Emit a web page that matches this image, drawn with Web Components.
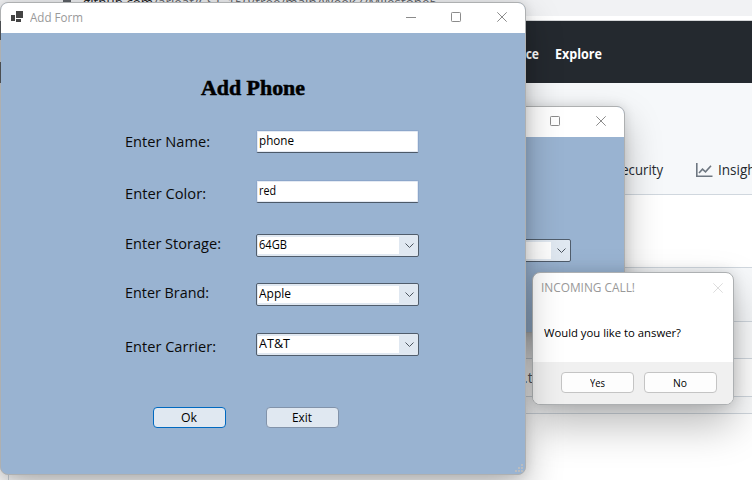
<!DOCTYPE html>
<html lang="en">
<head>
<meta charset="utf-8">
<title>Add Form</title>
<style>
html,body{margin:0;width:752px;height:480px;overflow:hidden;background:#fff}
body{font-family:"Open Sans","Noto Sans",sans-serif}
</style>
</head>
<body>
<desk-top></desk-top>
<script>
function define(name, html, ready) {
  const t = document.createElement('template');
  t.innerHTML = html;
  customElements.define(name, class extends HTMLElement {
    connectedCallback() {
      if (this.shadowRoot) return;
      this.attachShadow({mode: 'open'}).append(t.content.cloneNode(true));
      if (ready) ready(this, this.shadowRoot);
    }
  });
}

// Text line condensed or widened horizontally so that it spans `w` pixels.
define('fit-text', `
<style>:host{display:block;white-space:nowrap;line-height:20px;flex:none}span{display:inline-block;transform-origin:0 50%}</style>
<span><slot></slot></span>`, (host, root) => {
  const s = root.querySelector('span'), w = +host.getAttribute('w');
  if (w) {
    const k = w / s.getBoundingClientRect().width;
    host.style.width = w + 'px';
    s.style.transform = 'scaleX(' + k.toFixed(4) + ')';
  }
});

define('caption-buttons', `
<style>:host{display:flex;align-items:center;height:100%}svg{display:block}</style>
<svg width="120" height="30" fill="none" stroke="#8b8b8b" stroke-width="1"><path class="min" d="M1 14.5H11"/><rect x="46.5" y="9.5" width="9" height="9" rx=".8"/><path d="M92.3 9.3L101.7 18.7M101.7 9.3L92.3 18.7"/></svg>`);

define('app-window', `
<style>
:host{display:flex;flex-direction:column;box-sizing:border-box;border:1px solid #aeb0b1;border-radius:8px;overflow:hidden;background:#99b3d1;box-shadow:0 16px 36px rgba(0,0,0,.27),0 0 12px rgba(0,0,0,.12)}
header{display:flex;align-items:center;height:30px;background:#fff;flex:none}
caption-buttons{margin-left:auto}
svg{margin:0 7px 2px 10px}
fit-text{color:#999;font-size:12px}
main{flex:1;min-height:0}
</style>
<header><svg width="12" height="12" fill="#444"><path d="M5 0h7v7H5zM0 4h4v6H0zM5 8h5v3H5z"/></svg><fit-text w="53">Add Form</fit-text><caption-buttons></caption-buttons></header>
<main><slot></slot></main>`);

define('text-box', `
<style>
:host{display:block;box-sizing:border-box;width:163px;height:23px;border:1px solid #8ca6ca;border-bottom-color:#4c5968;border-radius:2px;background:#fff;box-shadow:inset 0 0 0 1px #e4eaf3;padding-left:2px;font-size:12px;color:#000}
::slotted(*){line-height:20px}
</style><slot></slot>`);

define('combo-box', `
<style>
:host{display:flex;box-sizing:border-box;width:163px;height:23px;border:1px solid #505d6c;border-radius:2px;background:#e0e8f1;padding:2px 0 2px 1px;font-size:12px;color:#000}
div{box-sizing:border-box;width:141px;height:17px;background:#fff;padding-left:1px}
::slotted(*){line-height:16px}
svg{margin:5px 0 0 5px}
</style><div><slot></slot></div><svg width="11" height="8" fill="none" stroke="#4d5660"><path d="M1.5 1.5L5.5 5.5L9.5 1.5"/></svg>`);

define('push-button', `
<style>
:host{display:flex;justify-content:center;align-items:center;box-sizing:border-box;width:73px;height:21px;border:1px solid var(--edge,#8293aa);border-radius:4px;background:var(--face,#e0e8f1);font-size:12px;color:#000;padding-right:1px}
</style><slot></slot>`);

define('phone-form', `
<style>
:host{display:block;padding:45px 0 0 124px}
.title{font:bold 20px "Liberation Serif",serif;line-height:20px;margin-left:76px;color:#000;-webkit-text-stroke:.5px #000}
.grid{display:grid;grid-template-columns:131px 163px;grid-template-rows:50px 54px 49px 50px 74px;margin-top:32px}
.grid>fit-text{font-size:15px;color:#0a0a0a}
.buttons{display:flex;gap:40px;margin-left:28px}
</style>
<fit-text class="title" w="104">Add Phone</fit-text>
<div class="grid">
<fit-text w="85" style="margin-top:1px">Enter Name:</fit-text><text-box><fit-text w="35">phone</fit-text></text-box>
<fit-text w="81" style="margin-top:3px">Enter Color:</fit-text><text-box><fit-text w="17">red</fit-text></text-box>
<fit-text w="96" style="margin-top:-1px">Enter Storage:</fit-text><combo-box><fit-text w="28">64GB</fit-text></combo-box>
<fit-text w="84" style="margin-top:-1px">Enter Brand:</fit-text><combo-box><fit-text w="32">Apple</fit-text></combo-box>
<fit-text w="91" style="margin-top:3px">Enter Carrier:</fit-text><combo-box><fit-text w="31">AT&amp;T</fit-text></combo-box>
</div>
<div class="buttons"><push-button style="--edge:#0069c0"><fit-text w="16">Ok</fit-text></push-button><push-button><fit-text w="20">Exit</fit-text></push-button></div>`);

define('call-dialog', `
<style>
:host{display:flex;flex-direction:column;box-sizing:border-box;border:1px solid #adb0b2;border-radius:8px;overflow:hidden;background:#fff;box-shadow:0 20px 42px rgba(0,0,0,.27),0 0 14px rgba(0,0,0,.14)}
header{display:flex;justify-content:space-between;align-items:center;height:29px;padding:0 10px 0 8px;color:#999;font-size:12px}
p{margin:21px 0 0 11px;color:#000;font-size:11.5px}
footer{display:flex;gap:10px;margin-top:auto;background:#f0f0f0;height:32px;padding:10px 0 0 28px;--edge:#c4c4c4;--face:#fdfdfd}
push-button fit-text{font-size:11.5px}
</style>
<header><fit-text w="94">INCOMING CALL!</fit-text><svg width="10" height="10" stroke="#ddd"><path d="M.3.3L9.7 9.7M9.7.3L.3 9.7"/></svg></header>
<p><fit-text w="137">Would you like to answer?</fit-text></p>
<footer><push-button><fit-text w="15">Yes</fit-text></push-button><push-button><fit-text w="14">No</fit-text></push-button></footer>`);

define('repo-page', `
<style>
:host{display:flex;flex-direction:column;width:752px;height:480px;background:#fff;overflow:hidden}
div{box-sizing:border-box;flex:none}
.url{height:16px;background:#f1f2f4;display:flex;gap:11px;padding-left:50px;color:#5f6368;font-size:13.5px}
.url svg{flex:none}
.url fit-text{margin-top:-8px}
b{font-weight:400;color:#202124}
.strip{height:5px;background:#fff;border-bottom:1px solid #d5d7d9}
.nav{height:62px;background:#24292f;color:#fff;font-size:14px;font-weight:700;display:flex;align-items:center;gap:16px;padding:3px 0 0 463px}
.tabs{height:112px;background:#f6f8fa;border-bottom:1px solid #d0d7de;display:flex;align-items:flex-end;padding:0 0 14px 614px;color:#24292f;font-size:13.7px}
.tabs svg{margin:0 5px 2px 33px;flex:none}
.table{height:147px;margin:72px 0 0 8px;border:solid #d0d7de;border-width:1px 0 1px 1px;border-radius:6px 0 0;background:#fff}
.table div{border-bottom:1px solid #d0d7de}
.r1{height:54px;background:#f6f8fa}
.r2{height:37px;background:#fafbfc}
.r3{height:38px;background:#fff;padding:9px 0 0 515px;color:#57606a;font-size:14px}
.r4{height:16px;background:#fafbfc;border:0!important}
.rest{height:66px;margin-left:8px;border-left:1px solid #d0d7de}
</style>
<div class="url"><svg width="22" height="16"><path d="M13 0h8v3h-8z" fill="#5f6368"/></svg><fit-text w="354"><b>github.com</b>/arleaf/CST_150/tree/main/Week7/Milestone5</fit-text></div>
<div class="strip"></div>
<div class="nav"><fit-text w="76">Marketplace</fit-text><fit-text w="47">Explore</fit-text></div>
<div class="tabs"><fit-text w="49">Security</fit-text><svg width="17" height="15" fill="none" stroke="#6e7781" stroke-width="1.6"><path d="M.8 0V13.2H16.5M3 10L6.5 6.2L9.5 8.8L15 2.8"/></svg><fit-text w="49">Insights</fit-text></div>
<div class="table"><div class="r1"></div><div class="r2"></div><div class="r3"><fit-text>.txt</fit-text></div><div class="r4"></div></div>
<div class="rest"></div>`);

define('desk-top', `
<style>
:host{display:block;position:relative;width:752px;height:480px;overflow:hidden}
.back,.front,call-dialog,.edge{position:absolute}
.back{left:100px;top:106px;width:525px;height:227px}
.front{left:0;top:2px;width:526px;height:473px}
call-dialog{left:532px;top:272px;width:202px;height:133px}
.row{display:flex;padding:102px 0 0 307px}
.grip{position:absolute;left:515px;top:464px}
.edge{left:0;top:21px;width:1px;height:62px;background:linear-gradient(#4a4d50 19px,transparent 19px 41px,#4a4d50 41px)}
</style>
<repo-page></repo-page>
<app-window class="back"><div class="row"><combo-box></combo-box></div></app-window>
<call-dialog></call-dialog>
<app-window class="front"><phone-form></phone-form></app-window>
<div class="edge"></div>
<svg class="grip" width="8" height="8" fill="#b9bcc0"><path d="M6 0h2v2H6zM3 3h2v2H3zM6 3h2v2H6zM0 6h2v2H0zM3 6h2v2H3zM6 6h2v2H6z"/></svg>`);
</script>
</body>
</html>
